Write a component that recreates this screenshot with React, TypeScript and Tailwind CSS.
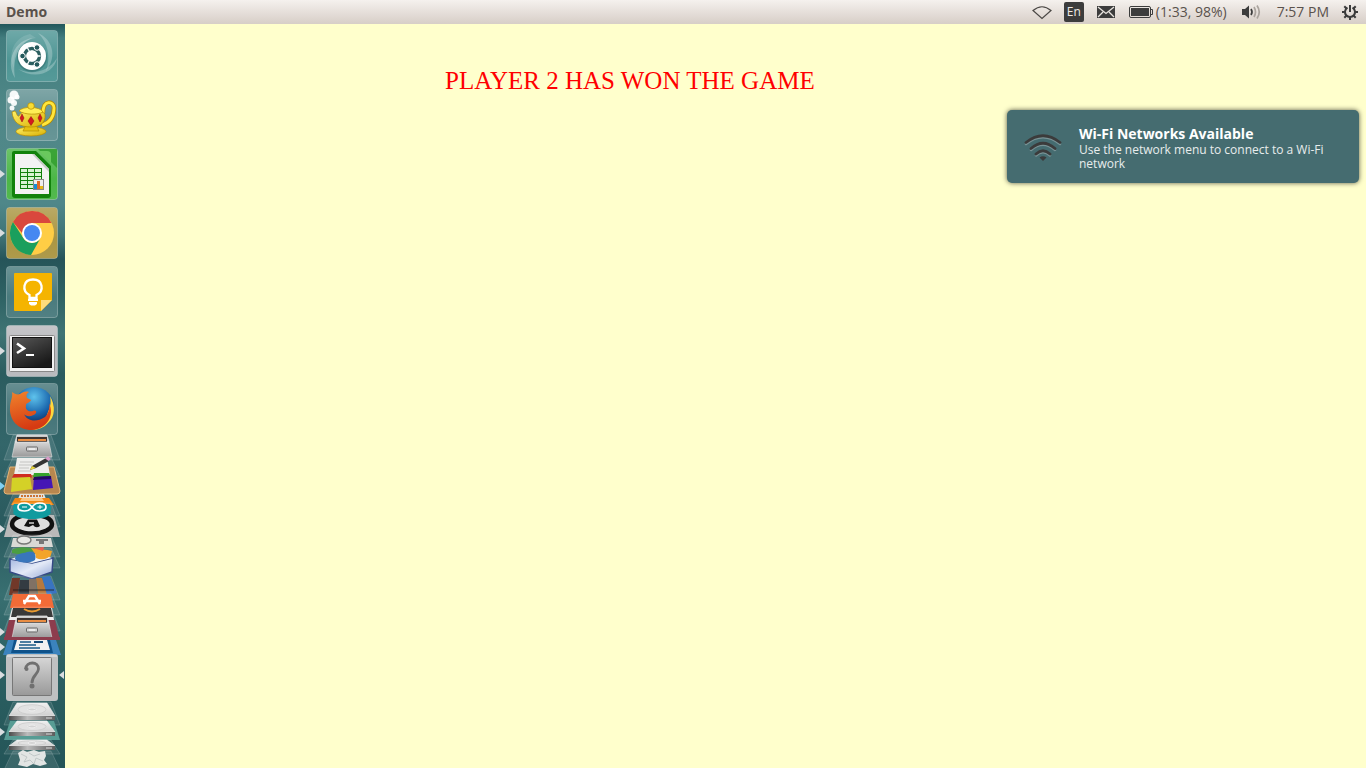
import type { ReactNode } from "react";

type Side = "none" | "left" | "both";

function Arrow({ y, color = "#d9dde0" }: { y: number; color?: string }) {
  return <path d={`M0 ${y - 4}L5 ${y}L0 ${y + 4}z`} fill={color} />;
}

/* A full launcher tile, 52px square, drawn in its own 65x52 canvas. */
function Tile({
  label,
  fill,
  running = "none",
  children,
}: {
  label: string;
  fill: string;
  running?: Side;
  children: ReactNode;
}) {
  return (
    <button type="button" aria-label={label} className="block h-[52px] w-full shrink-0">
      <svg viewBox="0 0 65 52" className="block h-full w-full overflow-visible">
        <rect x="6.5" y="0.5" width="51" height="51" rx="3" fill={fill} stroke="#ffffff" strokeOpacity=".3" />
        <rect x="7" y="1" width="50" height="50" rx="3" fill="url(#gloss)" />
        {children}
        {running !== "none" && <Arrow y={26} />}
      </svg>
    </button>
  );
}

/* A tile in the folded stack; `top` is the stack coordinate at which its slot starts. */
function Folded({
  label,
  top,
  height,
  children,
}: {
  label: string;
  top: number;
  height: number;
  children: ReactNode;
}) {
  return (
    <button type="button" aria-label={label} className="block w-full shrink-0" style={{ height }}>
      <svg viewBox={`0 ${top} 65 ${height}`} className="block h-full w-full overflow-visible">
        {children}
      </svg>
    </button>
  );
}

function Glass({ y, h, fill = "#ffffff", opacity = 0.1 }: { y: number; h: number; fill?: string; opacity?: number }) {
  return (
    <path
      d={`M13 ${y}H51L60 ${y + h}H4z`}
      fill={fill}
      fillOpacity={opacity}
      stroke="#ffffff"
      strokeOpacity=".2"
      strokeWidth=".8"
    />
  );
}

function Disk({ y, h }: { y: number; h: number }) {
  return (
    <>
      <path d={`M17 ${y}H47L55 ${y + h - 5}H9z`} fill="url(#platter)" stroke="#f2f2f2" strokeWidth=".6" />
      <path d={`M9 ${y + h - 5}H55V${y + h - 1}H9z`} fill="url(#diskEdge)" />
      <ellipse cx="32" cy={y + (h - 5) / 2} rx="14" ry={(h - 5) / 2.7} fill="#e2e2e2" stroke="#c9c9c9" strokeWidth=".7" />
      <ellipse cx="32" cy={y + (h - 5) / 2} rx="4" ry="1.4" fill="#d2d2d2" stroke="#fafafa" strokeWidth=".6" />
      <path d={`M46 ${y + h - 3}h6`} stroke="#ddd" />
    </>
  );
}

function Cabinet({ y }: { y: number }) {
  return (
    <>
      <path d={`M17 ${y - 1}H47L49 ${y + 6}H15z`} fill="#c9c9c9" stroke="#eeeeee" strokeWidth=".7" />
      <path d={`M17 ${y + 1}H47V${y + 6}H17z`} fill="#3d3430" />
      <path d={`M18 ${y + 3}H46V${y + 5}H18z`} fill="#e98d43" />
      <path d={`M15 ${y + 6}H49L52 ${y + 21}H12z`} fill="url(#metal)" stroke="#eeeeee" strokeWidth=".5" />
      <rect x="26.500" y={y + 11} width="11" height="4" rx=".6" fill="#d8d8d8" stroke="#6b6b6b" />
      <path d={`M29 ${y + 13}h6`} stroke="#fff" />
    </>
  );
}

function Page() {
  return (
    <>
      <path d="M17 458H47L50 475H14z" fill="#eeeeec" />
      <path d="M20 462h14M19 465h13M19 468h10M18 471h13" stroke="#b9b9b9" strokeWidth=".8" />
      <path d="M30 470L32 466L46 458L49 461L36 468z" fill="#343434" />
      <path d="M30 470L32 466L36 468z" fill="#e9d63b" />
      <path d="M45 458.500L48 456.500L51 459L48.500 461z" fill="#db9bc8" />
    </>
  );
}

function Defs() {
  return (
    <svg className="absolute h-0 w-0" aria-hidden="true">
      <defs>
        <linearGradient id="gloss" x2="0" y2="1">
          <stop stopColor="#fff" stopOpacity=".2" />
          <stop offset=".6" stopColor="#fff" stopOpacity=".02" />
          <stop offset="1" stopColor="#fff" stopOpacity=".06" />
        </linearGradient>
        <linearGradient id="metal" x2="0" y2="1">
          <stop stopColor="#d6d6d6" />
          <stop offset="1" stopColor="#999999" />
        </linearGradient>
        <linearGradient id="platter" x2="0" y2="1">
          <stop stopColor="#f0f0f0" />
          <stop offset="1" stopColor="#cfcfcf" />
        </linearGradient>
        <linearGradient id="diskEdge">
          <stop stopColor="#4c4c4c" />
          <stop offset=".4" stopColor="#bcbcbc" />
          <stop offset="1" stopColor="#5c5c5c" />
        </linearGradient>
        <linearGradient id="gold" x2="1" y2="1">
          <stop stopColor="#fff36a" />
          <stop offset="1" stopColor="#d8ad00" />
        </linearGradient>
        <linearGradient id="screen" x2=".6" y2="1">
          <stop stopColor="#585858" />
          <stop offset="1" stopColor="#191919" />
        </linearGradient>
        <radialGradient id="globe" cx=".5" cy=".25" r=".7">
          <stop stopColor="#5fc3ec" />
          <stop offset=".6" stopColor="#1a66ad" />
          <stop offset="1" stopColor="#0d2a5c" />
        </radialGradient>
        <linearGradient id="fox" x2=".3" y2="1">
          <stop stopColor="#f0832c" />
          <stop offset="1" stopColor="#d63a12" />
        </linearGradient>
        <linearGradient id="boxFront" x2="1" y2="1">
          <stop stopColor="#a3b6e0" />
          <stop offset=".5" stopColor="#e4eaf7" />
          <stop offset="1" stopColor="#8ea3d4" />
        </linearGradient>
      </defs>
    </svg>
  );
}

function Launcher() {
  return (
    <nav
      aria-label="Launcher"
      className="relative flex h-[calc(100vh-24px)] w-[65px] shrink-0 flex-col overflow-hidden bg-[linear-gradient(180deg,#22575b_0px,#427d7e_14px,#508888_90px,#4f8789_180px,#3f7376_212px,#265459_235px,#2d6163_270px,#3f7474_310px,#2b5c5f_350px,#33666a_420px,#2a5a5e_500px,#386f71_570px,#2c6062_640px,#245558_744px)] pt-[6px]"
    >
      <Defs />
      <div className="flex shrink-0 flex-col gap-[7px]">
        <Tile label="Dash" fill="#4a9392">
          <path d="M38 3C52 9 58 26 46 41C51 28 48 12 38 3z" fill="#fff" fillOpacity=".25" />
          <path d="M57 28C54 44 34 50 18 39C30 45 48 43 57 28z" fill="#fff" fillOpacity=".25" />
          <path d="M15 48C5 32 14 10 33 8C19 13 12 28 15 48z" fill="#fff" fillOpacity=".28" />
          <path d="M30 4C12 8 8 26 14 38C13 24 17 12 36 8z" fill="#fff" fillOpacity=".12" />
          <circle cx="32" cy="27" r="15" fill="#174a4c" fillOpacity=".3" />
          <circle cx="32" cy="26" r="14" fill="#fff" />
          <circle cx="32" cy="26" r="7.500" fill="none" stroke="#2b5e60" strokeWidth="3.400" />
          <g stroke="#fff" strokeWidth="1.300">
            <path d="M32 26L40.500 26M32 26L27.500 34M32 26L27.500 18" />
          </g>
          <circle cx="32" cy="26" r="5.500" fill="#fff" />
          <g fill="#24595c" stroke="#fff" strokeWidth="1">
            <circle cx="22.500" cy="26" r="2.800" />
            <circle cx="37" cy="17.500" r="2.800" />
            <circle cx="37" cy="34.500" r="2.800" />
          </g>
        </Tile>
        <Tile label="Teapot" fill="#5e8f90">
          <path d="M43 24C43 10 54 12 54 19C54 29 49 34 42 36" fill="none" stroke="#b58a00" strokeWidth="4.500" />
          <path d="M43 24C43 10 54 12 54 19C54 29 49 34 42 36" fill="none" stroke="#ffe63b" strokeWidth="2.800" />
          <g stroke="#b58a00" strokeWidth=".7">
            <ellipse cx="31" cy="42.500" rx="15" ry="4.500" fill="url(#gold)" />
            <path d="M26 36H36L39 42H23z" fill="#e5c111" />
            <path d="M12 23L15 22C17 24 17 28 19 27C21 20 42 20 45 25C46 34 40 38 31 38C20 38 13 34 12 23z" fill="url(#gold)" />
            <path d="M19 22C22 17 40 17 43 23C38 26 25 26 19 22z" fill="#ffee55" />
            <circle cx="31" cy="17" r="3.300" fill="#f9dd32" />
          </g>
          <path d="M22 25L24 29L22 33L20 29zM31 27.500L34 32L31 36.500L28 32zM40 25L42 29L40 33L38 29z" fill="#d51920" stroke="#8c0d10" strokeWidth=".5" />
          <g fill="#fff" fillOpacity=".93">
            <circle cx="14" cy="6" r="4.500" /><circle cx="11" cy="11" r="3.500" /><circle cx="14" cy="14" r="3" /><circle cx="12" cy="19" r="2.500" /><circle cx="17" cy="8" r="2.500" />
          </g>
        </Tile>
        <Tile label="LibreOffice Calc" fill="#48b543" running="left">
          <path d="M38 1H57V20z" fill="#2c9a28" opacity=".75" />
          <path d="M14 3H36L51 18V47Q51 50 48 50H15Q12 50 12 47V5Q12 3 14 3z" fill="#12820c" />
          <path d="M15 6H34L49 21V46H15z" fill="#f3f3f3" />
          <path d="M39 3L51 15V7Q51 3 47 3z" fill="#69c85d" />
          <path d="M34 6L49 21V24L32 6z" fill="#c9cbc9" />
          <rect x="20" y="20" width="22" height="21" fill="#11800c" />
          <g fill="#d8f3d2">
            {[21, 25, 29, 33, 37].map((y) => (
              <path key={y} d={`M21 ${y}h6v3h-6zM28 ${y}h6v3h-6zM35 ${y}h6v3h-6z`} />
            ))}
          </g>
          <rect x="33.500" y="31.500" width="10" height="10" fill="#eee" stroke="#888" />
          <path d="M34 36h3v5h-3z" fill="#168fd7" />
          <path d="M37 33h3v8h-3z" fill="#df6b25" />
          <path d="M40 38h3v3h-3z" fill="#e6b716" />
        </Tile>
        <Tile label="Google Chrome" fill="#a9943f" running="left">
          <circle cx="32" cy="26" r="22" fill="#ffcd45" />
          <path d="M12.950 15A22 22 0 0 1 51.500 16H32L22 26z" fill="#d9483d" />
          <path d="M12.950 15L23.300 31A10 10 0 0 0 40 32L31 48A22 22 0 0 1 12.950 15z" fill="#1a9f5d" />
          <circle cx="32" cy="26" r="10" fill="#fff" />
          <circle cx="32" cy="26" r="8" fill="#4688f1" />
        </Tile>
        <Tile label="Google Keep" fill="#46787b">
          <path d="M15 7H51Q52 7 52 8V34L41 45H15Q14 45 14 44V8Q14 7 15 7z" fill="#f5b400" />
          <path d="M52 34H41V45z" fill="#fddc7c" />
          <path d="M29.500 32V29C21.500 25 23 13.500 33 13.500S44.500 25 36.500 29V32z" fill="none" stroke="#fff" strokeWidth="2.300" />
          <path d="M28 33h10v2H28zM29 36h8v2l-2 1.500h-4l-2-1.500z" fill="#fff" />
        </Tile>
        <Tile label="Terminal" fill="#b6b7bb" running="left">
          <rect x="9.500" y="10.500" width="45" height="36" rx="1" fill="#f1f1f1" stroke="#888" />
          <rect x="12.500" y="12.500" width="39" height="30" fill="url(#screen)" stroke="#111" />
          <path d="M17 18.500L24 23.500L17 28" fill="none" stroke="#fff" strokeWidth="2.600" />
          <path d="M26 30h8" stroke="#fff" strokeWidth="2" />
        </Tile>
        <div className="-mt-px">
          <Tile label="Firefox" fill="#417276">
            <circle cx="34" cy="24" r="20" fill="url(#globe)" />
            <path d="M50 13C56 23 55 34 48 40C43 46 35 48 29 46C40 45 46 37 48 29C51 23 51 18 50 13z" fill="#ffd83c" />
            <path d="M12 9C15 11 17 12 20 11C23 9 25 8 29 9C26 11 26 13 27 15L31 17C30 20 25 20 26 23C25 27 29 29 33 28C35 27 37 28 36 30C33 34 26 34 24 31C27 38 36 40 45 34C49 30 50 24 49 20C55 32 47 46 32 47C18 47 9 37 10 24C10 18 13 15 12 9z" fill="url(#fox)" />
          </Tile>
        </div>
      </div>
      <div className="flex shrink-0 flex-col">
        <Folded label="Files" top={435} height={23}>
          <Glass y={435} h={25} />
          <Cabinet y={436} />
        </Folded>
        <Folded label="Text Editor" top={458} height={12}>
          <Glass y={457} h={20} />
        </Folded>
        <Folded label="Blocks" top={470} height={26}>
          <path d="M10 467H54L60 491Q60 494 57 494H7Q4 494 4 491z" fill="#b7874f" stroke="#e5b579" />
          <Page />
          <path d="M14 474H31L32 477.500H12z" fill="#cf2c20" />
          <path d="M34 473H49L51 477H33z" fill="#35a32b" />
          <path d="M12 478L30 477L32 489L11 492z" fill="#d4d127" />
          <path d="M34 477L51 476L53 488L33 490z" fill="#4516b5" />
          <path d="M34 477L51 476V479L33 480z" fill="#220b62" />
          <Arrow y={486} color="#7fd0f3" />
        </Folded>
        <Folded label="Media" top={496} height={9}>
          <Glass y={494} h={22} />
          <path d="M20 494H44L46 499H18z" fill="#e5e2dc" />
          <path d="M21 496H43" stroke="#ca7235" strokeWidth="2" strokeDasharray="2 1" />
          <path d="M15 498H49L54 505H11z" fill="#f08713" />
          <path d="M22 498H42L44 501H20z" fill="#fbc47f" />
        </Folded>
        <Folded label="Arduino" top={505} height={12}>
          <Glass y={503} h={24} />
          <path d="M14 504H50C54 514 45 519 32 519S10 514 14 504z" fill="#109b9f" />
          <path d="M32 507C29 503 27 503 24.500 503C20 503 18 505 18 507S20 511 24.500 511C27 511 29 511 32 507C35 503 37 503 39.500 503C44 503 46 505 46 507S44 511 39.500 511C37 511 35 511 32 507z" fill="none" stroke="#fff" strokeWidth="1.700" />
          <path d="M22 507h5M37.500 507h5M40 505v4" stroke="#fff" />
        </Folded>
        <Folded label="Player" top={517} height={20}>
          <path d="M10 515H54L60 537H4z" fill="#b9b9b9" />
          <ellipse cx="32" cy="524" rx="20" ry="9.500" fill="#dedede" stroke="#111" strokeWidth="4.500" />
          <path d="M24 526L28 519.500H37L40 526Q36 529 33 525L29 527z" fill="#111" />
          <path d="M29 523h5" stroke="#dedede" strokeWidth="1.400" />
          <path d="M13 512H51C50 517 42 519 32 519S14 517 13 512z" fill="#109b9f" />
          <Arrow y={529} />
        </Folded>
        <Folded label="Settings" top={537} height={11}>
          <Glass y={535} h={22} />
          <path d="M13 538H51L53 547H11z" fill="#d9d9d5" />
          <ellipse cx="24" cy="540" rx="7" ry="4" fill="#e7e7e4" stroke="#777" strokeWidth="1.400" />
          <path d="M36 539h12v2h-4v3h-5v-3h-3z" fill="#777" />
        </Folded>
        <Folded label="Image Box" top={548} height={31}>
          <Glass y={548} h={20} />
          <path d="M12 550C18 546 28 547 34 549L30 556L12 553z" fill="#4b9e42" />
          <path d="M31 548C39 550 46 549 52 551C51 556 49 561 44 562C39 559 35 554 31 548z" fill="#f3a42a" />
          <path d="M33 548L44 547L43 551z" fill="#e96051" />
          <path d="M10 559L32 563L53 558L52 572L32 579L10 572z" fill="url(#boxFront)" stroke="#354985" strokeWidth="1.400" />
          <path d="M11 559L22 555L40 554L52 558L32 563z" fill="#f0f4fb" />
          <path d="M35 552C41 550 50 551 50 555C48 560 40 560 36 558z" fill="#f3a42a" />
          <path d="M15 559C15 553 22 554 27 552C33 550 37 554 35 560C29 564 18 563 15 559z" fill="#3876bc" />
        </Folded>
        <Folded label="Library" top={579} height={16}>
          <Glass y={576} h={24} />
          <path d="M12 578H20L18 595H9z" fill="#713829" />
          <path d="M20 580H29V595H18z" fill="#343b42" />
          <path d="M29 579H36L37 595H29z" fill="#807164" />
          <path d="M36 578H42L48 595H38z" fill="#b7793e" />
          <path d="M42 577L50 576L57 593L47 595z" fill="#3974c1" />
          <path d="M13 590H54" stroke="#1c1c1c" strokeOpacity=".4" strokeWidth="2" />
        </Folded>
        <Folded label="Software" top={595} height={14}>
          <Glass y={593} h={22} />
          <path d="M13 594H51L54 608H10z" fill="#f26b37" />
          <path d="M24 604L29 596H35L40 604M23 601H41" fill="none" stroke="#fff" strokeWidth="2.400" />
        </Folded>
        <Folded label="Amazon" top={609} height={11}>
          <Glass y={607} h={24} />
          <path d="M12 608H52L54 620H9z" fill="#eeeeee" />
          <path d="M13 608H51L53 617H11z" fill="#393939" />
          <path d="M24 609Q32 614 40 609" fill="none" stroke="#e99a30" strokeWidth="2" />
        </Folded>
        <Folded label="Archive" top={620} height={20}>
          <path d="M9 620H55L60 640H4z" fill="#8d3d4d" />
          <Cabinet y={617} />
          <path d="M4 637H60V640H4z" fill="#8d3d4d" />
          <Arrow y={632} />
        </Folded>
        <Folded label="LibreOffice Writer" top={640} height={15}>
          <path d="M8 640H56L61 655H3z" fill="#3b83bd" />
          <path d="M14 640H50L53 653H11z" fill="#0f528a" />
          <path d="M17 640H47L50 650H14z" fill="#f2f2f2" />
          <path d="M20 642H31M19 645H36M19 648H40" stroke="#175987" strokeWidth="1.500" />
          <path d="M34 641H43V643H34z" fill="#174d79" />
          <Arrow y={647} />
        </Folded>
        <Folded label="Unknown application" top={655} height={46}>
          <rect x="6" y="654" width="52" height="47" rx="3" fill="#bfc1c2" />
          <path d="M7 655H57V657H7z" fill="#d3d6d8" />
          <rect x="12.500" y="657.500" width="39" height="38" rx="1" fill="url(#metal)" stroke="#777" />
          <path d="M25.500 669C26 661 39 661 38.500 669C38 675 32 675 32 683" fill="none" stroke="#707070" strokeWidth="2.800" />
          <circle cx="26.500" cy="669" r="2" fill="#707070" />
          <circle cx="32" cy="686" r="2.500" fill="#707070" />
          <Arrow y={675} />
          <path d="M64 671L59 675L64 679z" fill="#d9dde0" />
        </Folded>
        <Folded label="Disk 1" top={701} height={20}>
          <Glass y={702} h={23} opacity={0.08} />
          <Disk y={703} h={18} />
        </Folded>
        <Folded label="Disk 2" top={721} height={17}>
          <path d="M10 721H54L60 740H4z" fill="#579c94" />
          <Disk y={721} h={16} />
          <Arrow y={732} />
        </Folded>
        <Folded label="Disk 3" top={738} height={13}>
          <Glass y={740} h={14} opacity={0.08} />
          <Disk y={740} h={11} />
        </Folded>
        <Folded label="Trash" top={751} height={17}>
          <Glass y={751} h={19} />
          <path d="M18 753L23 750L27 752L34 750L39 752L45 751L46 756L44 760L47 764L40 766L33 764L27 767L18 765L20 760z" fill="#e2e5e4" />
          <path d="M21 754L27 757L24 762L30 760L34 764L36 758L43 761M29 753L34 756L40 754" fill="none" stroke="#b9c0c0" strokeWidth=".8" />
        </Folded>
      </div>
    </nav>
  );
}

function TopPanel() {
  return (
    <header className="flex h-6 shrink-0 items-center justify-between bg-linear-to-b from-[#f5f1ee] to-[#d7cec7] pr-2 pl-[6px] text-sm text-[#5a524c]">
      <span className="font-bold">Demo</span>
      <div className="flex items-center">
        <button type="button" aria-label="Network" className="mr-3">
          <svg viewBox="0 0 20 16" className="block h-4 w-5">
            <path d="M1 6.500Q10 -1 19 6.500L10 14.500z" fill="none" stroke="#4a4744" strokeWidth="1.200" />
          </svg>
        </button>
        <button type="button" className="mr-[13px] h-5 w-5 rounded-xs bg-[#3c3c3c] text-xs text-[#eeeae6]">
          En
        </button>
        <button type="button" aria-label="Messages" className="mr-[14px]">
          <svg viewBox="0 0 18 12" className="block h-3 w-[18px]">
            <path d="M0 0H18V12H0z" fill="#3c3c3c" />
            <path d="M1 1L9 7.500L17 1M1 11L6 6M17 11L12 6" fill="none" stroke="#e9e4df" strokeWidth="1.300" />
          </svg>
        </button>
        <button type="button" className="mr-[14px] flex items-center gap-[3px]">
          <svg viewBox="0 0 24 12" className="block h-3 w-6">
            <rect x=".5" y=".5" width="21" height="11" rx="1.500" fill="none" stroke="#3c3c3c" />
            <rect x="2" y="2" width="18" height="8" fill="#3c3c3c" />
            <path d="M22 3.500h1.500v5H22" fill="none" stroke="#3c3c3c" />
          </svg>
          (1:33, 98%)
        </button>
        <button type="button" aria-label="Sound" className="mr-4">
          <svg viewBox="0 0 20 16" className="block h-4 w-5">
            <path d="M1 5H4L8 1.500V14.500L4 11H1z" fill="#3c3c3c" />
            <path d="M10 5Q12 8 10 11" fill="none" stroke="#3c3c3c" strokeWidth="1.700" />
            <path d="M13 3Q16 8 13 13M16 1.500Q20.500 8 16 14.500" fill="none" stroke="#aaa39d" strokeWidth="1.700" />
          </svg>
        </button>
        <button type="button" className="mr-[13px]">7:57 PM</button>
        <button type="button" aria-label="System" className="block">
          <svg viewBox="0 0 16 16" className="block h-4 w-4">
            <path d="M5.500 3.700A5 5 0 1 0 10.500 3.700" fill="none" stroke="#3c3c3c" strokeWidth="2" />
            <path d="M8 1V8M0 8H3M13 8H16M2.300 2.300L4.500 4.500M13.700 2.300L11.500 4.500M2.300 13.700L4.500 11.500M13.700 13.700L11.500 11.500M8 13V16" stroke="#3c3c3c" strokeWidth="2" />
          </svg>
        </button>
      </div>
    </header>
  );
}

function Notification() {
  return (
    <aside
      role="status"
      className="absolute top-[86px] right-[7px] flex w-[352px] items-center rounded-[5px] bg-[#456c70] px-[17px] pt-[14px] pb-3 text-[#e8eded] shadow-[0_0_5px_rgba(0,0,0,0.65)]"
    >
      <svg viewBox="0 0 38 27" className="mr-[17px] block h-[27px] w-[38px] shrink-0" fill="none" strokeWidth="2.800" strokeLinecap="round">
        <path d="M2 10Q19 -3.500 36 10M7 16Q19 5.500 31 16M12 21.500Q19 15 26 21.500" stroke="#799396" strokeWidth="2.400" />
        <path d="M2 8.500Q19 -5 36 8.500M7 14.500Q19 4 31 14.500M12 20Q19 13.500 26 20" stroke="#3b3b3b" />
        <path d="M15.500 23.500Q19 21 22.500 23.500L19 27z" fill="#3b3b3b" stroke="none" />
      </svg>
      <div className="text-xs leading-[14px]">
        <h2 className="text-sm leading-[19px] font-bold text-white">Wi-Fi Networks Available</h2>
        <p>Use the network menu to connect to a Wi-Fi network</p>
      </div>
    </aside>
  );
}

export default function App() {
  return (
    <div className="flex h-screen flex-col bg-[#ffffcc] font-['Open_Sans','Noto_Sans',sans-serif]">
      <TopPanel />
      <div className="relative flex min-h-0 flex-1">
        <Launcher />
        <main className="flex-1 pt-[42px] pl-[380px]">
          <h1 className="font-['Liberation_Serif',serif] text-[25px] leading-[30px] text-[#ff0000]">
            PLAYER 2 HAS WON THE GAME
          </h1>
        </main>
        <Notification />
      </div>
    </div>
  );
}
